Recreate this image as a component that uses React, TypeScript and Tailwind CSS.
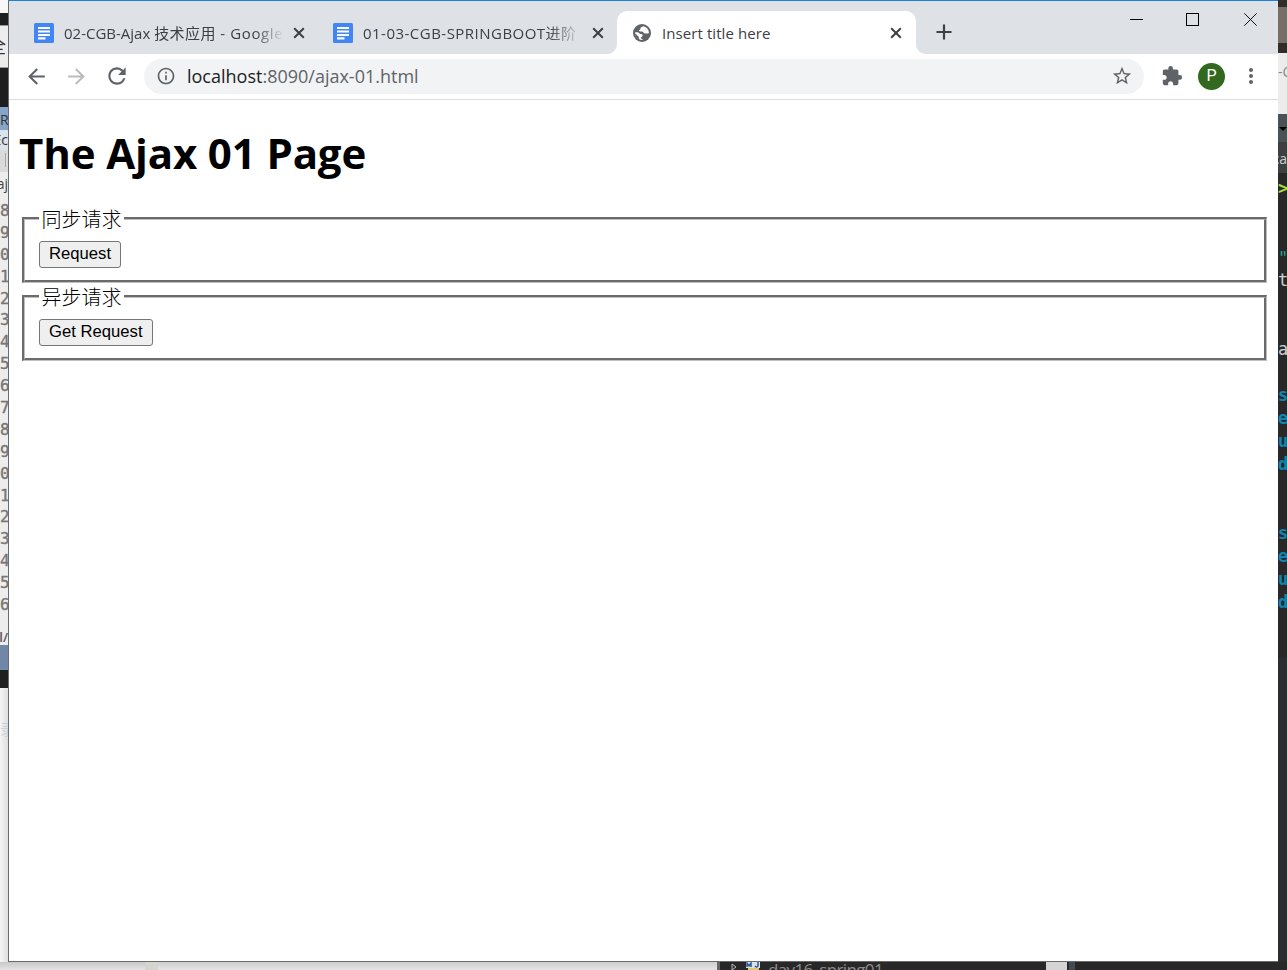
import React from "react";
import {
  MdArrowBack,
  MdArrowForward,
  MdRefresh,
  MdInfoOutline,
  MdStarBorder,
  MdExtension,
  MdMoreVert,
} from "react-icons/md";

const lineNumbers = "8901234567890123456".split("");

const DocIcon = () => (
  <svg width="20" height="20" viewBox="0 0 20 20" className="shrink-0">
    <rect width="20" height="20" rx="1.5" fill="#4285f4" />
    <path d="M4 5h12M4 8.500h12M4 12h12M4 15.300h7.500" stroke="#fff" strokeWidth="2.200" />
  </svg>
);

const GlobeIcon = () => (
  <svg width="18" height="18" viewBox="0 0 18 18" className="shrink-0">
    <circle cx="9" cy="9" r="9" fill="#5f6368" />
    <path
      d="M10.500 2.200C8.500 2.600 7.300 3.400 7.400 4.700 7.400 5.700 6.300 5.600 6 6.500c-.2.900 1 .9 2.200.9 1.600 0 2 .6 2.500 1.400.5.900 1.800.500 2.800.6.900.2 1.700.1 2.400-.4.1-3.300-2-6-5.400-6.800Z"
      fill="#fff"
    />
    <path
      d="M2.100 8.300c1.700-.3 3.300-.1 4.200 1 .7.9 1.600.7 2.500 1 1.300.4 1.200 1.500.3 2.100-.9.500-1.300 1.100-1 1.900.2.700 1 .9 2.100 1.500C5.600 16.600 1.800 13 2.100 8.300Z"
      fill="#fff"
    />
    <path d="M2.100 9.500c1.500.2 1.500 1.900 2.800 2.500 1.200.6.800 1.900 1.500 3.400C3.600 14.400 2 12.200 2.100 9.500Z" fill="#5f6368" />
  </svg>
);

const CloseIcon = () => (
  <svg width="12" height="12" viewBox="0 0 12 12" className="shrink-0">
    <path d="M1.200 1.200l9.600 9.600M10.800 1.200l-9.600 9.600" stroke="#3c4043" strokeWidth="2" />
  </svg>
);

const WindowControls = () => (
  <div className="ml-auto flex h-[36px] items-center pr-[21px]">
    <svg width="13" height="13" viewBox="0 0 13 13">
      <path d="M0 6.500h13" stroke="#000" />
    </svg>
    <svg width="13" height="13" viewBox="0 0 13 13" className="ml-[43px]">
      <rect x=".5" y=".5" width="12" height="12" fill="none" stroke="#000" />
    </svg>
    <svg width="13" height="13" viewBox="0 0 13 13" className="ml-[45px]">
      <path d="M.3.300l12.400 12.400M12.700.300L.300 12.700" stroke="#111" />
    </svg>
  </div>
);

const tabText =
  "overflow-hidden whitespace-nowrap text-[15px] leading-[24px] text-[#3c4043]";

const TabStrip = () => (
  <div className="flex h-[53px] bg-[#dee1e6]">
    <div className="mt-[11px] flex h-[42px] w-[309px] items-center pl-[25px]">
      <DocIcon />
      <span className={`${tabText} ml-[10px] w-[220px] shrink-0 [mask-image:linear-gradient(to_right,black_190px,transparent_220px)]`}>
        02-CGB-Ajax <span className="tracking-[0.4px]">技术应用</span>
        <span className="tracking-[0.6px]"> - Google 文档</span>
      </span>
      <div className="ml-[9px]"><CloseIcon /></div>
      <div className="ml-[13px] h-[25px] w-px bg-[#80868b]" />
    </div>
    <div className="mt-[11px] flex h-[42px] w-[299px] items-center pl-[15px]">
      <DocIcon />
      <span className={`${tabText} ml-[10px] w-[220px] tracking-[0.48px] [mask-image:linear-gradient(to_right,black_185px,transparent_220px)]`}>
        01-03-CGB-SPRINGBOOT进阶
      </span>
      <div className="ml-[9px]"><CloseIcon /></div>
    </div>
    <div className="relative mt-[10px] flex h-[43px] w-[299px] items-center rounded-t-[10px] bg-white pl-[16px]">
      <div className="absolute -left-[10px] bottom-0 size-[10px] bg-[radial-gradient(circle_at_0_0,#dee1e6_9.5px,white_10.5px)]" />
      <div className="absolute -right-[10px] bottom-0 size-[10px] bg-[radial-gradient(circle_at_100%_0,#dee1e6_9.5px,white_10.5px)]" />
      <GlobeIcon />
      <span className={`${tabText} ml-[11px] w-[220px] tracking-[0.08px]`}>Insert title here</span>
      <div className="ml-[8px]"><CloseIcon /></div>
    </div>
    <svg width="16" height="16" viewBox="0 0 16 16" className="ml-[20px] mt-[23px]">
      <path d="M8 .5v15M.5 8h15" stroke="#3c4043" strokeWidth="2.200" />
    </svg>
    <WindowControls />
  </div>
);

const Toolbar = () => (
  <div className="flex h-[46px] items-center border-b border-[#dadce0] pb-px pl-[15px] text-[#5f6368]">
    <MdArrowBack size={25} />
    <MdArrowForward size={25} className="ml-[15px] text-[#babcbe]" />
    <MdRefresh size={26} className="ml-[15px]" />
    <div className="ml-[14px] flex h-[35px] w-[1000px] items-center rounded-full bg-[#f1f3f4] pl-[12px] pr-[11px]">
      <MdInfoOutline size={20} />
      <span className="ml-[11px] whitespace-nowrap text-[18px] leading-[24px]">
        <span className="text-[#202124]">localhost</span>:8090/ajax-01.html
      </span>
      <MdStarBorder size={22} className="ml-auto" />
    </div>
    <MdExtension size={22} className="ml-[17px]" />
    <div className="ml-[15px] flex size-[27px] items-center justify-center rounded-full bg-[#33691e] font-[Roboto] text-[16px] text-white">
      P
    </div>
    <MdMoreVert size={24} className="ml-[14px]" />
  </div>
);

const Fieldset = ({ legend, label }: { legend: string; label: string }) => (
  <div className="relative h-[66px] border-b border-l-2 border-r border-t-2 border-b-[#c0c0c0] border-l-[#6b6b6b] border-r-[#c0c0c0] border-t-[#6b6b6b]">
    <div className="h-full border-b-2 border-l border-r-2 border-t border-b-[#6b6b6b] border-l-[#c0c0c0] border-r-[#6b6b6b] border-t-[#c0c0c0] pl-[14px] pt-[21px]">
      <button className="flex h-[27px] items-center rounded-[3px] border border-[#767676] bg-[#efefef] px-[9px] font-['Liberation_Sans',sans-serif] text-[16.67px] leading-none text-black">
        {label}
      </button>
    </div>
    <span className="absolute -top-[12px] left-[15px] bg-white px-[2.500px] text-[20px] font-light leading-[26px]">
      {legend}
    </span>
  </div>
);

const LeftEdge = () => (
  <div className="w-[8px] shrink-0 overflow-hidden whitespace-nowrap bg-[#ededed] font-['DejaVu_Sans_Mono','Noto_Sans_CJK_SC',monospace] text-[#777]">
    <div className="h-[13px] bg-[#f8f8f8]" />
    <div className="h-[12px] bg-[#1f1f1f]" />
    <div className="flex h-[43px] items-center justify-end border-y border-[#999] pr-[2px] text-[18px] text-[#333]">全</div>
    <div className="h-[39px] bg-[#1f1f1f]" />
    <div className="h-[23px] bg-[#86a5c9] font-['Open_Sans',sans-serif] text-[14px] leading-[26px] text-[#333]">R</div>
    <div className="flex h-[20px] justify-end bg-[#dce3ea] font-['Open_Sans',sans-serif] text-[14px] leading-[20px] text-[#333]">Ec</div>
    <div className="h-[22px] bg-[#dadada] pl-[5px] pt-[3px]"><div className="h-[14px] w-px bg-[#aaa]" /></div>
    <div className="flex h-[28px] justify-end font-['Open_Sans',sans-serif] text-[14px] leading-[24px] text-[#444]">aj</div>
    {lineNumbers.map((n, i) => (
      <div key={i} className="h-[21.900px] text-[16px] leading-[22px] [-webkit-text-stroke:0.4px]">{n}</div>
    ))}
    <div className="flex h-[29px] justify-end pt-[10px] font-['Open_Sans',sans-serif] text-[13px] font-semibold leading-[22px] text-[#555]">nl/</div>
    <div className="h-[25px] bg-[#7087a8]" />
    <div className="h-[18px] bg-[#1f1f1f]" />
    <div className="h-[274px] bg-gradient-to-r from-[#f5f5f5] to-[#dedede] pt-[32px] text-[#c5d2d7]">
      <div className="text-[15px] leading-[20px]">录</div>
    </div>
  </div>
);

const RightEdge = () => (
  <div className="w-[9px] shrink-0 overflow-hidden whitespace-nowrap bg-[#282828] font-['DejaVu_Sans_Mono',monospace] text-[17px] text-[#c8d0d5]">
    <div className="h-[7px] bg-[#332d29]" />
    <div className="h-[36px] bg-[#756e69]" />
    <div className="h-[10px] bg-[#332d29]" />
    <div className="h-[61px] bg-[#ececec] pt-[9px] font-['Open_Sans',sans-serif] text-[14px] leading-[20px] text-[#888]">-C</div>
    <div className="h-[28px] bg-[#4b5255] pt-[12px]">
      <svg width="9" height="6" viewBox="0 0 9 6"><path d="M1 1h8L5 5Z" fill="#000" /></svg>
    </div>
    <div className="flex h-[31px] justify-end bg-[#3d3f40] font-['Open_Sans',sans-serif] text-[14px] leading-[34px]">ca</div>
    <div className="h-[66px] font-bold text-[#a6e22e] leading-[30px]">&gt;</div>
    <div className="h-[30px] text-[#1ba784] leading-[38px]">&quot;</div>
    <div className="h-[69px] leading-[22px]">t</div>
    <div className="h-[46px] leading-[22px]">a</div>
    {["s", "e", "u", "d", "", "", "s", "e", "u", "d"].map((c, i) => (
      <div key={i} className="h-[23px] font-bold leading-[23px] text-[#0c87b3]">{c}</div>
    ))}
    <div className="mt-[44px] h-[304px] bg-[#2c2d2e]" />
  </div>
);

const BottomEdge = () => (
  <div className="flex h-[8px] overflow-hidden bg-[#282828] *:shrink-0">
    <div className="h-full w-[145px] bg-gradient-to-b from-[#c8c8c8] to-[#e4e4e4]" />
    <div className="h-full w-[13px] bg-[#d5d5d0]" />
    <div className="h-full w-[559px] bg-gradient-to-b from-[#cfcfcf] to-[#e4e4e4]" />
    <div className="h-full w-[3px] bg-[#666]" />
    <svg width="6" height="8" viewBox="0 0 6 8" className="ml-[11px]"><path d="M1 2v6l4-3Z" fill="none" stroke="#bbb" /></svg>
    <svg width="17" height="8" viewBox="0 0 17 8" className="ml-[9px]">
      <path d="M0 0h14v6H0z" fill="#d8e0e8" />
      <path d="M1 5V1l2 3 2-3v4M12 0v4q-1 2-3 0" fill="none" stroke="#285c8f" strokeWidth="1.500" />
      <path d="M2 6h11v2H2z" fill="#e7c36f" />
    </svg>
    <span className="ml-[5px] w-[243px] text-[17px] leading-[16px] tracking-[-0.65px] text-[#8c8c8c]">day16_spring01</span>
    <div className="ml-[35px] h-full w-[21px] bg-[#d4d4d4]" />
    <div className="ml-[2px] h-full w-[6px] bg-[#444a4e]" />
  </div>
);

const App = () => {
  return (
    <div className="h-[970px] w-[1287px] overflow-hidden bg-white font-['Open_Sans','Noto_Sans_CJK_SC',sans-serif]">
      <div className="flex h-[962px]">
        <LeftEdge />
        <main className="w-[1270px] shrink-0 border-b border-l border-t border-b-[#6b6b6b] border-l-[#6b6b6b] border-t-[#1883d7] bg-white">
          <TabStrip />
          <Toolbar />
          <section className="pl-[10px] pt-[25px] text-black">
            <h1 className="whitespace-nowrap text-[42px] font-bold leading-[56px] tracking-[-0.13px]">
              The Ajax 01 Page
            </h1>
            <div className="ml-[3px] mt-[36px] flex w-[1245px] flex-col gap-[12px]">
              <Fieldset legend="同步请求" label="Request" />
              <Fieldset legend="异步请求" label="Get Request" />
            </div>
          </section>
        </main>
        <RightEdge />
      </div>
      <BottomEdge />
    </div>
  );
};

export default App;
